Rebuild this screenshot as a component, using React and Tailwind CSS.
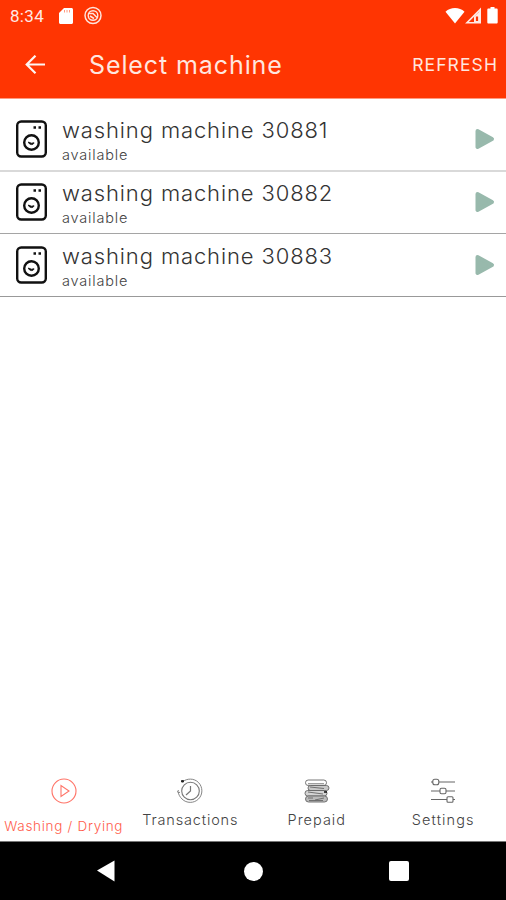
import React from 'react';

const MACHINES = [
    { id: 30881, status: 'available', border: 'h-[63px] border-b-2 border-[#d9d9d9]' },
    { id: 30882, status: 'available', border: 'h-[62px] mb-px border-b border-[#a5a5a5]' },
    { id: 30883, status: 'available', border: 'h-[62px] mb-px border-b border-[#999]' },
];

const App = () => {
    return (
        <div className="w-[506px] h-[900px] flex flex-col bg-white overflow-hidden font-['Inter',sans-serif]">
            <StatusBar />
            <Header />

            <main className="flex-1 pt-[10px]">
                {MACHINES.map((machine) => (
                    <MachineRow key={machine.id} machine={machine} />
                ))}
            </main>

            <TabBar />
            <SystemNav />
        </div>
    );
};

const StatusBar = () => (
    <div className="h-8 shrink-0 bg-[#ff3502] text-[#ffe9e4] flex items-center justify-between pl-[10px] pr-[7px]">
        <div className="flex items-center">
            <span className="w-[35px] font-['Roboto',sans-serif] text-[17px] leading-none tracking-[0.3px] whitespace-nowrap">8:34</span>
            {/* SD card */}
            <svg className="ml-[14px]" width="14" height="18" viewBox="0 0 14 18">
                <path d="M5 1h7.5c.8 0 1.500.7 1.500 1.500v13c0 .8-.7 1.500-1.500 1.500h-11C.7 17 0 16.300 0 15.500V6z" fill="#fff" />
                <path d="M5.500 3v2.500M8 3v2.500M10.500 3v2.500" stroke="#ff9a80" strokeWidth="1" />
            </svg>
            <svg className="ml-[10px]" width="20" height="20" viewBox="0 0 20 20" fill="none" stroke="#ffe4dd">
                <circle cx="10" cy="9.500" r="8" strokeWidth="1.500" />
                <circle cx="10" cy="9.500" r="4.800" strokeWidth="1.400" />
                <path d="M6 7.500h4l4 4M7 10l4 2.500" strokeWidth="1.500" />
            </svg>
        </div>
        <div className="flex items-center">
            <svg width="20" height="18" viewBox="0 0 20 18">
                <path d="M.5 4.700C5.500-.3 14.500-.3 19.500 4.700L10 16.500z" fill="#fff" />
            </svg>
            <svg width="18" height="18" viewBox="0 0 18 18">
                <path d="M15.200 2.500V15.700H2z" fill="none" stroke="#ffeae5" strokeWidth="1.600" />
                <path d="M9 9.500L15 4v12H9z" fill="#ffeae5" />
                <path d="M12 9.500v4.500" stroke="#ff3502" strokeWidth="2.200" />
            </svg>
            <svg className="ml-[4px]" width="12" height="18" viewBox="0 0 12 18">
                <path d="M3.500 0h4v1.500h2c.8 0 1.200.5 1.200 1.200v12.500c0 .8-.5 1.300-1.200 1.300h-8C.7 16.500.3 16 .3 15.200V2.700c0-.7.5-1.200 1.200-1.200h2z" fill="#fff" />
            </svg>
        </div>
    </div>
);

const Header = () => (
    <header className="h-[67px] shrink-0 bg-[#ff3502] text-[#ffe6df] flex items-center pl-[25px] pr-[8px] border-b border-[#ff9a80]">
        <svg width="20" height="20" viewBox="0 0 20 20" fill="none" stroke="#fff5f2" strokeWidth="2.200">
            <path d="M20 9.500H2M10.500 .7L1.700 9.500l8.800 8.800" />
        </svg>
        <h1 className="ml-[44px] pt-px flex-1 text-[25px] leading-none tracking-[0.9px] whitespace-nowrap">Select machine</h1>
        <button className="text-[17.5px] leading-none tracking-[1.1px] whitespace-nowrap">REFRESH</button>
    </header>
);

const MachineRow = ({ machine }) => (
    <div className={`flex items-center pl-4 pr-[11px] pb-0.5 ${machine.border}`}>
        <svg className="shrink-0" width="31" height="38" viewBox="0 0 31 38" fill="none" stroke="#111">
            <rect x="1.200" y="1.500" width="28.600" height="35" rx="4" strokeWidth="2.400" />
            <circle cx="15.500" cy="22.500" r="7.300" strokeWidth="2.400" />
            <path d="M12.300 22l3.200 1.200 2.500-.5c-.4 2.600-4.700 2.600-5.700-.7z" fill="#111" strokeWidth="0.800" />
            <path d="M17.500 7.500h2.500M22.500 7.500h2.500" strokeWidth="2.500" />
        </svg>
        <div className="ml-[15px] mt-[5px] flex-1">
            <p className="text-[22px] leading-[26px] font-light tracking-[0.88px] text-[#333] whitespace-nowrap">
                washing machine {machine.id}
            </p>
            <p className="text-[14.5px] leading-[23px] font-light tracking-[0.8px] text-[#444]">{machine.status}</p>
        </div>
        <svg width="20" height="22" viewBox="0 0 20 22">
            <path d="M2.500 3L17 11 2.500 19z" fill="#98b9ac" stroke="#98b9ac" strokeWidth="4" strokeLinejoin="round" />
        </svg>
    </div>
);

const TabBar = () => (
    <nav className="h-[74px] shrink-0 grid grid-cols-4">
        <Tab label={<span className="text-[13.5px] tracking-[0.7px] text-[#ff5c4c]">Washing / Drying</span>} gap="mt-[12px]">
            <g stroke="#ff7468" strokeWidth="1.100">
                <circle cx="13" cy="13" r="12" />
                <path d="M10 7.500v11l8-5.500z" />
            </g>
        </Tab>
        <Tab label={<span className="text-[14.5px] tracking-[0.85px]">Transactions</span>} gap="mt-[6px]">
            <g stroke="#777" strokeWidth="0.900">
                <path d="M5.500 3.800C10 .2 17 0 21.500 4.500c4.500 4.700 4.500 12 0 16.500s-12 4.500-16.500 0C3 19 1.500 16.500 1.200 14" />
                <circle cx="13.500" cy="13" r="8.800" strokeWidth="1.100" />
                <path d="M13.500 8v5l-4.500 4" strokeWidth="1.200" />
                <path d="M1.500 12l-1 2 2.500.500" />
                <path d="M4.500 2.500h2v1.500h-2z" fill="#222" stroke="#222" />
            </g>
        </Tab>
        <Tab label={<span className="text-[14.5px] tracking-[1px]">Prepaid</span>} gap="mt-[6px]">
            {/* stack of coins */}
            <g stroke="#666" strokeWidth="0.900">
                <rect x="1.500" y="2" width="21" height="5.500" rx="2.700" fill="#fff" />
                <rect x="4" y="7.500" width="21" height="5" rx="2.500" fill="#c8c8c8" />
                <rect x="1" y="12.500" width="22" height="5.500" rx="2.700" fill="#d4d4d4" />
                <rect x="1.500" y="18" width="22" height="6" rx="3" fill="#bbb" />
                <path d="M4 5.800h16M6 9l14 1.500M4 14l15 2M4 20h5M11 22l9-2M5 22.500h14" />
                <path d="M20 14h3" stroke="#111" strokeWidth="1.500" />
            </g>
        </Tab>
        <Tab label={<span className="text-[14.5px] tracking-[1.1px]">Settings</span>} gap="mt-[6px]">
            <g stroke="#666" strokeWidth="1.100">
                <path d="M1 4h2M9 4h16M1 13h9M16 13h9M1 21.500h16M23 21.500h2" />
                <rect x="2.800" y="1.300" width="6" height="5.400" rx="2" />
                <rect x="10" y="10.300" width="6" height="5.400" rx="1.500" />
                <rect x="17" y="18.800" width="6" height="5.400" rx="1" />
            </g>
        </Tab>
    </nav>
);

const Tab = ({ label, gap, children }) => (
    <button className="flex flex-col items-center pt-[11px] pl-px font-light text-[#444]">
        <svg className="shrink-0" width="26" height="26" viewBox="0 0 26 26" fill="none">
            {children}
        </svg>
        <div className={`flex leading-5 whitespace-nowrap ${gap}`}>{label}</div>
    </button>
);

const SystemNav = () => (
    <div className="h-[59px] shrink-0 bg-black border-t border-[#777] flex items-center justify-between pl-[96px] pr-[97px]">
        <svg width="20" height="22" viewBox="0 0 20 22">
            <path d="M1 10.500L18.500.5v21z" fill="#fff" />
        </svg>
        <div className="ml-px w-[19px] h-[19px] rounded-full bg-white" />
        <div className="w-5 h-5 rounded-xs bg-white" />
    </div>
);

export default App;
